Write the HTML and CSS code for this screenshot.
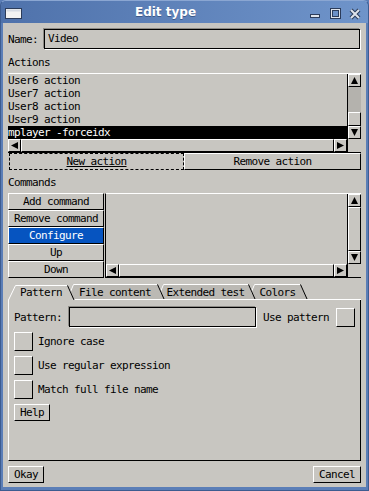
FILE: index.html
```html
<!DOCTYPE html>
<html lang="en">
<head>
    <meta charset="UTF-8">
    <title>Edit type</title>
    <link rel="stylesheet" href="styles.css">
</head>
<body>
    <div class="window">
        <div class="titlebar">
            <svg class="app-icon" width="17" height="11" viewBox="0 0 17 11">
                <rect x="0.5" y="0.5" width="16" height="10" fill="#f2f2f2" stroke="#2c3c5a"/>
                <rect x="1.5" y="1.5" width="14" height="2" fill="#d6dbe4"/>
            </svg>
            <span class="title">Edit type</span>
            <svg class="wm-buttons" width="52" height="12" viewBox="0 0 52 12">
                <rect x="1.5" y="6.5" width="9" height="3" fill="#dfe4ec" stroke="#2c3c5a"/>
                <rect x="22.5" y="1.5" width="8" height="8" fill="none" stroke="#2c3c5a" stroke-width="3"/>
                <rect x="22.5" y="1.5" width="8" height="8" fill="none" stroke="#dfe4ec" stroke-width="1"/>
                <path d="M42 2 L50 10 M50 2 L42 10" stroke="#2c3c5a" stroke-width="4"/>
                <path d="M42 2 L50 10 M50 2 L42 10" stroke="#dfe4ec" stroke-width="2"/>
            </svg>
        </div>

        <div class="content">
            <div class="name-row">
                <label>Name:</label>
                <div class="entry">Video</div>
            </div>

            <div class="section-label">Actions</div>
            <div class="listbox">
                <div class="list-main">
                    <div class="list-rows">
                        <div class="row">User6 action</div>
                        <div class="row">User7 action</div>
                        <div class="row">User8 action</div>
                        <div class="row">User9 action</div>
                        <div class="row selected">mplayer -forceidx</div>
                    </div>
                    <div class="vscroll">
                        <div class="arrow"><svg width="7" height="7" viewBox="0 0 7 7"><path d="M3.5 0 L7 7 L0 7 Z"/></svg></div>
                        <div class="track"></div>
                        <div class="thumb"></div>
                        <div class="arrow"><svg width="7" height="7" viewBox="0 0 7 7"><path d="M0 0 L7 0 L3.5 7 Z"/></svg></div>
                    </div>
                </div>
                <div class="hscroll-row">
                    <div class="arrow"><svg width="7" height="7" viewBox="0 0 7 7"><path d="M0 3.5 L7 0 L7 7 Z"/></svg></div>
                    <div class="hthumb"></div>
                    <div class="arrow"><svg width="7" height="7" viewBox="0 0 7 7"><path d="M0 0 L7 3.5 L0 7 Z"/></svg></div>
                    <div class="corner"></div>
                </div>
            </div>
            <div class="action-buttons">
                <button class="btn focus"><u>New action</u></button>
                <button class="btn">Remove action</button>
            </div>

            <div class="section-label spaced">Commands</div>
            <div class="commands">
                <div class="cmd-buttons">
                    <button class="btn">Add command</button>
                    <button class="btn">Remove command</button>
                    <button class="btn active">Configure</button>
                    <button class="btn">Up</button>
                    <button class="btn">Down</button>
                </div>
                <div class="cmd-list">
                    <div class="list-main">
                        <div class="list-rows"></div>
                        <div class="vscroll">
                            <div class="arrow"><svg width="7" height="7" viewBox="0 0 7 7"><path d="M3.5 0 L7 7 L0 7 Z"/></svg></div>
                            <div class="thumb fill"></div>
                            <div class="arrow"><svg width="7" height="7" viewBox="0 0 7 7"><path d="M0 0 L7 0 L3.5 7 Z"/></svg></div>
                        </div>
                    </div>
                    <div class="hscroll-row">
                        <div class="arrow"><svg width="7" height="7" viewBox="0 0 7 7"><path d="M0 3.5 L7 0 L7 7 Z"/></svg></div>
                        <div class="hthumb"></div>
                        <div class="arrow"><svg width="7" height="7" viewBox="0 0 7 7"><path d="M0 0 L7 3.5 L0 7 Z"/></svg></div>
                        <div class="corner"></div>
                    </div>
                </div>
            </div>

            <div class="tabs">
                <svg class="tab-shapes" width="353" height="18" viewBox="0 0 353 18">
                    <polygon points="240,17 246,2 292,2 300,17" fill="#bbb9b4"/>
                    <polyline points="240.5,17 246.5,2.5 292,2.5" fill="none" stroke="#fff"/>
                    <line x1="292.5" y1="2.5" x2="299" y2="17" stroke="#000"/>
                    <polygon points="149,17 155,2 240,2 246,17" fill="#bbb9b4"/>
                    <polyline points="149.5,17 155.5,2.5 240,2.5" fill="none" stroke="#fff"/>
                    <line x1="240.5" y1="2.5" x2="247" y2="17" stroke="#000"/>
                    <polygon points="59,17 65,2 149,2 155,17" fill="#bbb9b4"/>
                    <polyline points="59.5,17 65.5,2.5 149,2.5" fill="none" stroke="#fff"/>
                    <line x1="149.5" y1="2.5" x2="156" y2="17" stroke="#000"/>
                    <line x1="65" y1="17.5" x2="353" y2="17.5" stroke="#fff"/>
                    <polygon points="0,18 7,3 59,3 65,18" fill="#c8c6c1"/>
                    <polyline points="0.5,18 7.5,3.5 59,3.5" fill="none" stroke="#fff"/>
                    <line x1="59.5" y1="3.5" x2="66" y2="18" stroke="#000"/>
                </svg>
                <div class="tab-labels">
                    <span class="tab t-pattern">Pattern</span>
                    <span class="tab t-file">File content</span>
                    <span class="tab t-ext">Extended test</span>
                    <span class="tab t-colors">Colors</span>
                </div>
            </div>
            <div class="panel">
                <div class="pattern-row">
                    <label>Pattern:</label>
                    <div class="entry"></div>
                    <span>Use pattern</span>
                    <div class="check"></div>
                </div>
                <div class="check-row"><div class="check"></div><span>Ignore case</span></div>
                <div class="check-row"><div class="check"></div><span>Use regular expression</span></div>
                <div class="check-row"><div class="check"></div><span>Match full file name</span></div>
                <div><button class="btn small">Help</button></div>
            </div>

            <div class="bottom-row">
                <button class="btn small">Okay</button>
                <button class="btn small">Cancel</button>
            </div>
        </div>
    </div>
</body>
</html>
```

FILE: styles.css
```css
* {
    box-sizing: border-box;
}
body {
    margin: 0;
    font-family: "DejaVu Sans Mono", monospace;
    font-size: 11px;
    letter-spacing: -0.62px;
    color: #000;
    background: #5a7db6;
}
.window {
    width: 369px;
    height: 491px;
    display: flex;
    flex-direction: column;
    background: #5b7eb7;
    border: 1px solid #3d5c90;
    border-top-color: #8aa6d2;
    border-radius: 6px 6px 0 0;
}
.titlebar {
    height: 22px;
    display: flex;
    align-items: center;
    padding: 0 7px 0 4px;
    background: linear-gradient(to right, #4f72ab, #6f94ca);
    border-radius: 5px 5px 0 0;
}
.app-icon {
    flex: none;
    margin-top: 3px;
}
.title {
    flex: 1;
    text-align: center;
    font-family: "DejaVu Sans", sans-serif;
    font-weight: bold;
    font-size: 12px;
    letter-spacing: 0;
    color: #fff;
    text-shadow: 0 1px 0 #3a5888;
}
.wm-buttons {
    flex: none;
    margin-top: 3px;
}
.content {
    flex: 1;
    margin: 0 2px 3px 2px;
    padding: 6px 5px 4px 5px;
    background: #c8c6c1;
    display: flex;
    flex-direction: column;
}

/* name */
.name-row {
    display: flex;
    align-items: center;
    gap: 6px;
    height: 20px;
}
.entry {
    flex: 1;
    height: 20px;
    line-height: 18px;
    padding-left: 3px;
    border: 1px solid #000;
    box-shadow: 1px 1px 0 #fff, -1px -1px 0 #8c8a85;
    margin-right: 1px;
    white-space: pre;
}
.section-label {
    height: 13px;
    line-height: 13px;
    margin-top: 7px;
}
.section-label.spaced {
    margin-top: 6px;
}

/* lists */
.listbox {
    margin-top: 4px;
    height: 80px;
    border-top: 1px solid #fff;
    border-bottom: 1px solid #000;
    display: flex;
    flex-direction: column;
}
.list-main {
    flex: 1;
    display: flex;
    min-height: 0;
}
.list-rows {
    flex: 1;
}
.row {
    height: 13px;
    line-height: 13px;
    white-space: pre;
}
.row.selected {
    background: #000;
    color: #fff;
}
.vscroll {
    width: 14px;
    display: flex;
    flex-direction: column;
    border-left: 1px solid #000;
}
.arrow {
    flex: none;
    width: 13px;
    height: 13px;
    display: flex;
    align-items: center;
    justify-content: center;
    background: #c8c6c1;
    border: 1px solid;
    border-color: #fff #000 #000 #fff;
}
.track {
    flex: 1;
    background: #b4b2ad;
}
.thumb {
    height: 14px;
    border: 1px solid;
    border-color: #fff #000 #000 #fff;
}
.thumb.fill {
    flex: 1;
}
.hscroll-row {
    height: 13px;
    display: flex;
    flex: none;
}
.hthumb {
    flex: 1;
    border: 1px solid;
    border-color: #fff #000 #000 #fff;
}
.corner {
    width: 14px;
    border-left: 1px solid #000;
}

/* buttons */
.btn {
    font: inherit;
    letter-spacing: inherit;
    color: #000;
    background: #c8c6c1;
    border: 1px solid;
    border-color: #fff #000 #000 #fff;
    padding: 0;
    height: 17px;
    line-height: 15px;
    white-space: pre;
}
.btn.focus {
    border: 1px dashed #000;
    margin-left: 1px;
}
.btn.active {
    background: #0654c0;
    color: #fff;
}
.btn.small {
    padding: 0 5px;
}
.action-buttons {
    display: grid;
    grid-template-columns: 176px 1fr;
    height: 17px;
}
.commands {
    margin-top: 4px;
    height: 85px;
    display: flex;
    gap: 1px;
}
.cmd-buttons {
    width: 96px;
    display: flex;
    flex-direction: column;
}
.cmd-list {
    flex: 1;
    display: flex;
    flex-direction: column;
    border-top: 1px solid #fff;
    border-left: 1px solid #000;
    border-bottom: 1px solid #000;
}

/* tabs */
.tabs {
    margin-top: 4px;
    height: 18px;
    margin-bottom: -1px;
    position: relative;
    z-index: 1;
}
.tab-shapes {
    position: absolute;
    left: 0;
    top: 0;
}
.tab-labels {
    position: relative;
    display: flex;
    padding-left: 4px;
    height: 18px;
    align-items: center;
    padding-top: 2px;
}
.tab {
    text-align: center;
    white-space: pre;
}
.t-pattern { width: 58px; }
.t-file { width: 90px; }
.t-ext { width: 91px; }
.t-colors { width: 53px; }
.panel {
    height: 162px;
    border: 1px solid;
    border-color: #fff #000 #000 #fff;
    padding: 7px 5px 0 5px;
    display: flex;
    flex-direction: column;
    gap: 5px;
}
.pattern-row {
    display: flex;
    align-items: center;
    gap: 7px;
    height: 20px;
}
.pattern-row .entry {
    margin-right: 0;
}
.check {
    flex: none;
    width: 19px;
    height: 19px;
    border: 1px solid;
    border-color: #fff #000 #000 #fff;
}
.check-row {
    display: flex;
    align-items: center;
    gap: 5px;
    height: 19px;
}
.bottom-row {
    margin-top: 5px;
    display: flex;
    justify-content: space-between;
    height: 17px;
}
```
